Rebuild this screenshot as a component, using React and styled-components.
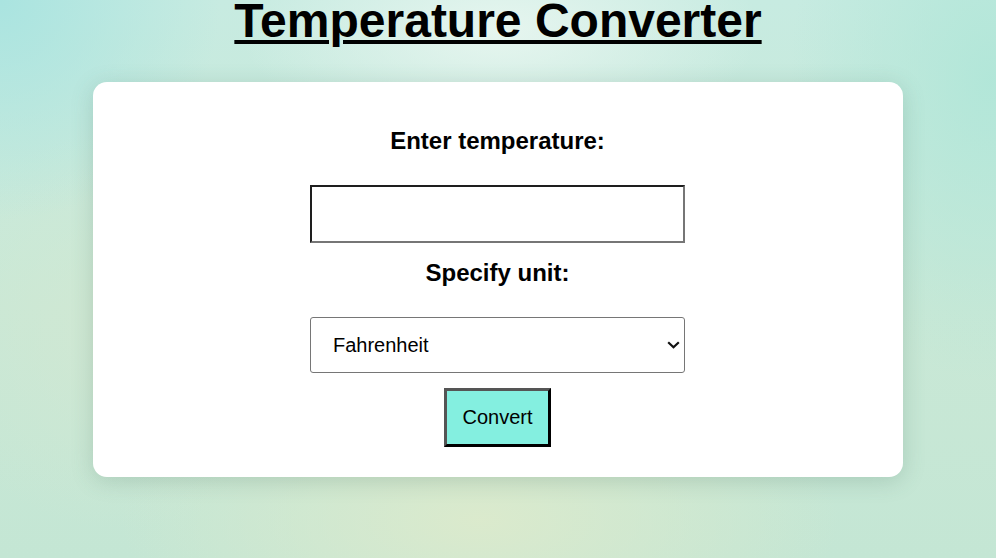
import React, { useState } from "react";
import styled, { createGlobalStyle } from "styled-components";

const Global = createGlobalStyle`
  html, body { margin: 0; padding: 0; }
  body {
    font-family: "Liberation Sans", Arial, sans-serif;
    color: #000;
    min-height: 558px;
    background-color: #c6e8d8;
    background-image:
      radial-gradient(ellipse 260px 120px at 500px 30px, rgba(232,246,240,0.95), rgba(232,246,240,0) 100%),
      radial-gradient(ellipse 360px 160px at 480px 520px, rgba(220,234,204,0.95), rgba(220,234,204,0) 100%),
      radial-gradient(ellipse 220px 220px at 0px 0px, rgba(170,228,224,1), rgba(170,228,224,0) 100%),
      radial-gradient(ellipse 200px 300px at 990px 80px, rgba(176,230,216,0.9), rgba(176,230,216,0) 100%),
      radial-gradient(ellipse 200px 200px at 120px 330px, rgba(210,232,210,0.8), rgba(210,232,210,0) 100%),
      linear-gradient(180deg, #c7ebe1 0%, #c9e8d6 55%, #c4e6d4 100%);
  }
`;

const Page = styled.main`
  display: flex;
  flex-direction: column;
  align-items: center;
  min-height: 558px;
  overflow: hidden;
`;

const Title = styled.h1`
  margin: -3px 0 37px;
  font-size: 48px;
  line-height: 48px;
  font-weight: 700;
  text-decoration: underline;
  text-underline-offset: 3px;
  text-decoration-thickness: 4px;
`;

const Card = styled.form`
  width: 810px;
  height: 395px;
  box-sizing: border-box;
  background: #fff;
  border-radius: 14px;
  box-shadow: 0 4px 22px rgba(70, 110, 90, 0.22);
  display: flex;
  flex-direction: column;
  align-items: center;
  padding: 45px 1px 0 0;
`;

const Label = styled.label`
  display: block;
  font-size: 24px;
  font-weight: 700;
  line-height: 27.6px;
  margin-bottom: ${(p) => p.$gap}px;
`;

const TextInput = styled.input`
  box-sizing: border-box;
  width: 375px;
  height: 58px;
  border-width: 2px;
  border-style: solid;
  border-color: #1e1e1e #767676 #767676 #1e1e1e;
  background: #fff;
  font-size: 20px;
  font-family: "Liberation Sans", Arial, sans-serif;
  padding: 0 20px;
  margin-bottom: 16px;
  outline: none;
`;

const SelectWrap = styled.div`
  position: relative;
  width: 375px;
  height: 56px;
  margin-bottom: 15px;
`;

const Select = styled.select`
  appearance: none;
  -webkit-appearance: none;
  box-sizing: border-box;
  width: 100%;
  height: 100%;
  border: 1px solid #767676;
  border-radius: 3px;
  background: #fff;
  color: #000;
  font-size: 20px;
  font-family: "Liberation Sans", Arial, sans-serif;
  padding: 0 30px 0 22px;
  outline: none;
`;

const Chevron = styled.svg`
  position: absolute;
  right: 5px;
  top: 24px;
  width: 13px;
  height: 8px;
  pointer-events: none;
`;

const Button = styled.button`
  box-sizing: border-box;
  height: 59px;
  padding: 0 15.5px;
  border-width: 3px;
  border-style: solid;
  border-color: #555 #000 #000 #555;
  background: #84efe0;
  color: #000;
  font-size: 20px;
  font-family: "Liberation Sans", Arial, sans-serif;
  cursor: pointer;
`;

export default function App() {
  const [unit, setUnit] = useState("F");
  return (
    <>
      <Global />
      <Page>
        <Title>Temperature Converter</Title>
        <Card onSubmit={(e) => e.preventDefault()}>
          <Label htmlFor="temp" $gap={30}>Enter temperature:</Label>
          <TextInput id="temp" type="text" />
          <Label htmlFor="unit" $gap={31}>Specify unit:</Label>
          <SelectWrap>
            <Select id="unit" value={unit} onChange={(e) => setUnit(e.target.value)}>
              <option value="F">Fahrenheit</option>
              <option value="C">Celsius</option>
            </Select>
            <Chevron viewBox="0 0 13 8" aria-hidden="true">
              <path d="M1.2 1.2 L6.5 6.3 L11.8 1.2" fill="none" stroke="#111" strokeWidth="2.2" />
            </Chevron>
          </SelectWrap>
          <Button type="submit">Convert</Button>
        </Card>
      </Page>
    </>
  );
}
